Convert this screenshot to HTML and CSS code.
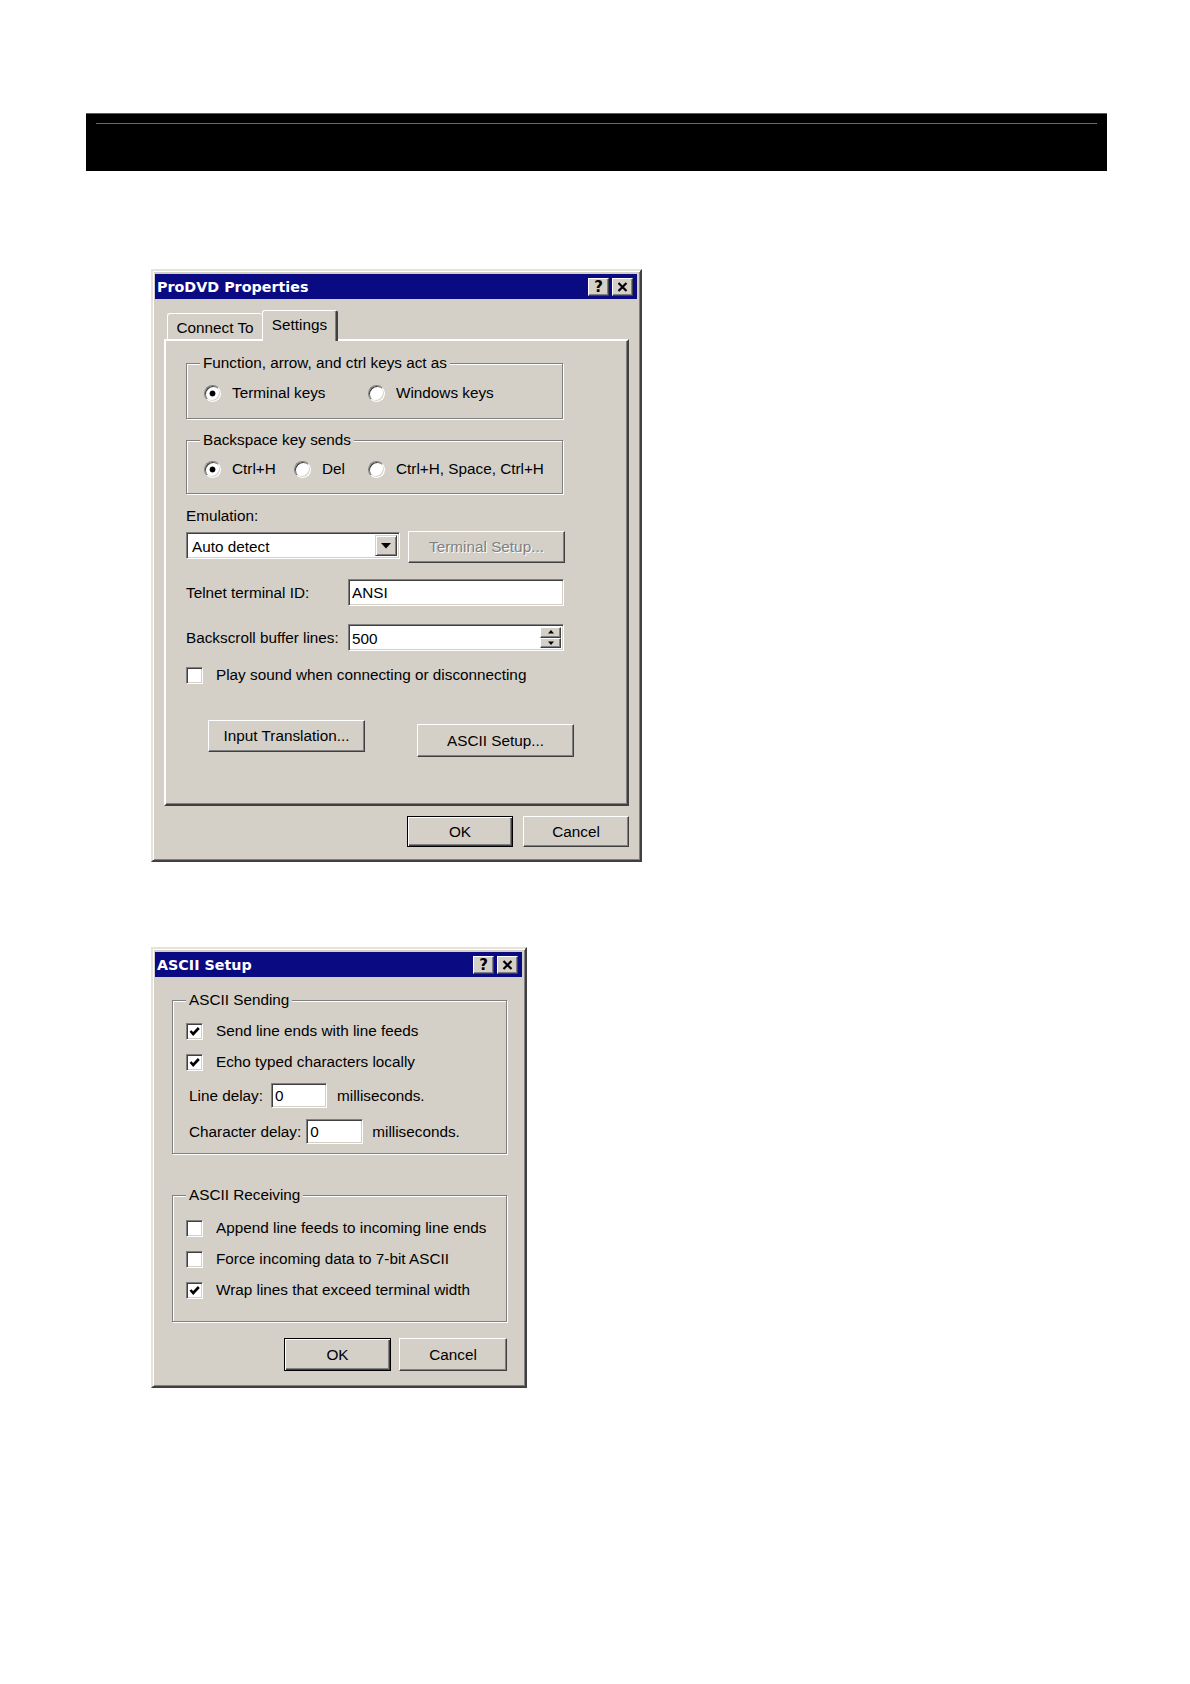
FILE: index.html
```html
<!DOCTYPE html>
<html lang="en">
<head>
    <meta charset="UTF-8">
    <meta name="viewport" content="width=device-width, initial-scale=1.0">
    <title>ProDVD Properties - ASCII Setup</title>
    <link rel="stylesheet" href="styles.css">
</head>
<body>
    <div class="banner"><div class="banner-rule"></div></div>

    <!-- ProDVD Properties dialog -->
    <div class="window props">
        <div class="titlebar">
            <span>ProDVD Properties</span>
            <span class="caption-btns">
                <span class="cbtn">?</span>
                <span class="cbtn"><svg width="11" height="10" viewBox="0 0 11 10"><path d="M1.5 1L9.5 9M9.5 1L1.5 9" stroke="#000" stroke-width="2.2" fill="none"/></svg></span>
            </span>
        </div>
        <div class="body">
            <div class="tabs">
                <div class="tab tab-first">Connect To</div>
                <div class="tab tab-active">Settings</div>
            </div>
            <div class="panel">
                <div class="group keys">
                    <div class="group-label">Function, arrow, and ctrl keys act as</div>
                    <div class="choices">
                        <label class="opt w164"><span class="radio on"></span>Terminal keys</label>
                        <label class="opt"><span class="radio"></span>Windows keys</label>
                    </div>
                </div>

                <div class="group backspace">
                    <div class="group-label">Backspace key sends</div>
                    <div class="choices">
                        <label class="opt w90"><span class="radio on"></span>Ctrl+H</label>
                        <label class="opt w74"><span class="radio"></span>Del</label>
                        <label class="opt"><span class="radio"></span>Ctrl+H, Space, Ctrl+H</label>
                    </div>
                </div>

                <div class="emu-label">Emulation:</div>
                <div class="combo-row">
                    <div class="combo field">
                        <span class="combo-text">Auto detect</span>
                        <span class="drop-btn"><svg width="10" height="6" viewBox="0 0 10 6"><path d="M0 0H10L5 5.5Z" fill="#000"/></svg></span>
                    </div>
                    <button class="btn btn-setup" disabled>Terminal Setup...</button>
                </div>

                <div class="field-row telnet">
                    <span class="field-label">Telnet terminal ID:</span>
                    <div class="field text-field">ANSI</div>
                </div>

                <div class="field-row backscroll">
                    <span class="field-label">Backscroll buffer lines:</span>
                    <div class="field text-field spin-field">
                        <span class="spin-value">500</span>
                        <span class="spin">
                            <span class="spin-btn"><svg width="6" height="4" viewBox="0 0 6 4"><path d="M0 3.5H6L3 0Z" fill="#000"/></svg></span>
                            <span class="spin-btn"><svg width="6" height="4" viewBox="0 0 6 4"><path d="M0 0.5H6L3 4Z" fill="#000"/></svg></span>
                        </span>
                    </div>
                </div>

                <label class="check-row sound"><span class="check"></span>Play sound when connecting or disconnecting</label>

                <div class="action-row">
                    <button class="btn btn-translate">Input Translation...</button>
                    <button class="btn btn-ascii">ASCII Setup...</button>
                </div>
            </div>
            <div class="footer">
                <button class="btn btn-default">OK</button>
                <button class="btn">Cancel</button>
            </div>
        </div>
    </div>

    <!-- ASCII Setup dialog -->
    <div class="window ascii">
        <div class="titlebar">
            <span>ASCII Setup</span>
            <span class="caption-btns">
                <span class="cbtn">?</span>
                <span class="cbtn"><svg width="11" height="10" viewBox="0 0 11 10"><path d="M1.5 1L9.5 9M9.5 1L1.5 9" stroke="#000" stroke-width="2.2" fill="none"/></svg></span>
            </span>
        </div>
        <div class="body">
            <div class="group sending">
                <div class="group-label">ASCII Sending</div>
                <label class="check-row"><span class="check"><svg width="13" height="13" viewBox="0 0 13 13"><path d="M2.5 6L5.2 9L10.8 3" stroke="#000" stroke-width="2.6" fill="none"/></svg></span>Send line ends with line feeds</label>
                <label class="check-row"><span class="check"><svg width="13" height="13" viewBox="0 0 13 13"><path d="M2.5 6L5.2 9L10.8 3" stroke="#000" stroke-width="2.6" fill="none"/></svg></span>Echo typed characters locally</label>
                <div class="delay-row">
                    <span>Line delay:</span>
                    <div class="field delay-field line-delay">0</div>
                    <span class="unit">milliseconds.</span>
                </div>
                <div class="delay-row">
                    <span>Character delay:</span>
                    <div class="field delay-field char-delay">0</div>
                    <span class="unit unit-wide">milliseconds.</span>
                </div>
            </div>

            <div class="group receiving">
                <div class="group-label">ASCII Receiving</div>
                <label class="check-row"><span class="check"></span>Append line feeds to incoming line ends</label>
                <label class="check-row"><span class="check"></span>Force incoming data to 7-bit ASCII</label>
                <label class="check-row"><span class="check"><svg width="13" height="13" viewBox="0 0 13 13"><path d="M2.5 6L5.2 9L10.8 3" stroke="#000" stroke-width="2.6" fill="none"/></svg></span>Wrap lines that exceed terminal width</label>
            </div>

            <div class="footer">
                <button class="btn btn-default">OK</button>
                <button class="btn btn-cancel">Cancel</button>
            </div>
        </div>
    </div>
</body>
</html>
```

FILE: styles.css
```css
body {
    margin: 0;
    background: #fff;
    font-family: "Liberation Sans", Arial, sans-serif;
    font-size: 15.3px;
    color: #000;
}

.banner {
    box-sizing: border-box;
    width: 1021px;
    height: 58px;
    margin: 113px 0 0 86px;
    padding-top: 9px;
    background: #000;
    border-top: 1px solid #5c5c5c;
}
.banner-rule {
    height: 1px;
    margin: 0 10px;
    background: #6a6a6a;
}

/* window frame */
.window {
    box-sizing: border-box;
    margin-left: 151px;
    padding: 3px 3px 0 2px;
    background: #d4d0c8;
    border: 2px solid;
    border-color: #e6e3dc #404040 #404040 #e6e3dc;
    box-shadow: inset 1px 1px #fff, inset -1px -1px #808080;
}
.props {
    width: 491px;
    height: 593px;
    margin-top: 98px;
}
.ascii {
    width: 376px;
    height: 441px;
    margin-top: 85px;
}
.titlebar {
    display: flex;
    align-items: center;
    justify-content: space-between;
    height: 25px;
    padding: 0 4px 0 2px;
    background: #0a0a82;
    color: #fff;
    font-family: "DejaVu Sans", sans-serif;
    font-weight: bold;
    font-size: 14.3px;
}
.caption-btns {
    display: flex;
    gap: 3px;
}
.cbtn {
    box-sizing: border-box;
    display: flex;
    align-items: center;
    justify-content: center;
    width: 21px;
    height: 18px;
    background: #d4d0c8;
    border: 1px solid;
    border-color: #fff #404040 #404040 #fff;
    box-shadow: inset -1px -1px #808080;
    color: #000;
    font-size: 15px;
}

.props .body {
    padding: 11px 8px 0 9px;
}
.ascii .body {
    padding: 23px 15px 0 17px;
}

/* tabs */
.tabs {
    display: flex;
    align-items: flex-end;
    height: 29px;
    padding-left: 3px;
}
.tab {
    box-sizing: border-box;
    height: 26px;
    padding-top: 4px;
    line-height: 20px;
    text-align: center;
    background: #d4d0c8;
    border: 1px solid;
    border-color: #fff #404040 transparent #fff;
    border-bottom: none;
    border-radius: 3px 3px 0 0;
}
.tab-first {
    width: 95px;
    border-right: none;
}
.tab-active {
    position: relative;
    z-index: 1;
    width: 76px;
    height: 31px;
    margin-bottom: -2px;
    border-right-width: 2px;
    box-shadow: inset -1px 0 #808080;
}
.panel {
    box-sizing: border-box;
    width: 465px;
    height: 467px;
    padding: 22px 0 0 20px;
    border: 2px solid;
    border-color: #fff #404040 #404040 #fff;
    box-shadow: inset -1px -1px #808080;
}

/* group boxes */
.group {
    box-sizing: border-box;
    border: 1px solid #808080;
    box-shadow: 1px 1px #fff, inset 1px 1px #fff;
}
.group-label {
    width: fit-content;
    margin: -11px 0 0 13px;
    padding: 0 3px;
    line-height: 20px;
    background: #d4d0c8;
}
.panel .group {
    width: 377px;
}
.keys {
    padding-bottom: 15px;
}
.keys .choices {
    margin-top: 10px;
}
.backspace {
    margin-top: 21px;
    padding-bottom: 14px;
}
.backspace .choices {
    margin-top: 9px;
}
.choices {
    display: flex;
    padding-left: 17px;
    line-height: 20px;
}
.opt {
    display: flex;
    align-items: center;
    gap: 11px;
}
.w164 { width: 164px; }
.w90 { width: 90px; }
.w74 { width: 74px; }

.radio {
    box-sizing: border-box;
    width: 17px;
    height: 17px;
    border-radius: 50%;
    border: 1px solid;
    border-color: #808080 #fff #fff #808080;
    box-shadow: inset 1px 1px #404040, inset -1px -1px #d4d0c8;
    background: #fff;
}
.radio.on {
    background: radial-gradient(circle, #000 0 2.6px, #fff 3.3px);
}

/* sunken fields */
.field {
    box-sizing: border-box;
    border: 1px solid;
    border-color: #808080 #fff #fff #808080;
    box-shadow: inset 1px 1px #404040, inset -1px -1px #d4d0c8;
    background: #fff;
}
.emu-label {
    margin-top: 12px;
    line-height: 20px;
}
.combo-row {
    display: flex;
    align-items: flex-start;
    margin-top: 5px;
}
.combo {
    display: flex;
    width: 214px;
    height: 27px;
    margin-top: 1px;
    padding: 2px;
}
.combo-text {
    flex: 1;
    padding-left: 3px;
    line-height: 23px;
}
.drop-btn {
    box-sizing: border-box;
    display: flex;
    align-items: center;
    justify-content: center;
    width: 22px;
    background: #d4d0c8;
    border: 1px solid;
    border-color: #d4d0c8 #404040 #404040 #d4d0c8;
    box-shadow: inset 1px 1px #fff, inset -1px -1px #808080;
}
.field-row {
    display: flex;
    align-items: center;
    height: 27px;
}
.telnet {
    margin-top: 16px;
}
.backscroll {
    margin-top: 18px;
}
.field-label {
    width: 162px;
}
.text-field {
    width: 216px;
    height: 27px;
    padding-left: 3px;
    line-height: 25px;
}
.spin-field {
    display: flex;
    padding: 2px 2px 2px 3px;
    line-height: 23px;
}
.spin-value {
    flex: 1;
}
.spin {
    display: flex;
    flex-direction: column;
    width: 21px;
}
.spin-btn {
    box-sizing: border-box;
    flex: 1;
    display: flex;
    align-items: center;
    justify-content: center;
    background: #d4d0c8;
    border: 1px solid;
    border-color: #fff #404040 #404040 #fff;
    box-shadow: inset -1px -1px #808080;
}

/* checkboxes */
.check-row {
    display: flex;
    align-items: center;
    gap: 13px;
    height: 20px;
    line-height: 20px;
}
.check {
    box-sizing: border-box;
    display: flex;
    align-items: center;
    justify-content: center;
    width: 17px;
    height: 17px;
    border: 1px solid;
    border-color: #808080 #fff #fff #808080;
    box-shadow: inset 1px 1px #404040, inset -1px -1px #d4d0c8;
    background: #fff;
}
.sound {
    margin-top: 14px;
}

/* buttons */
.btn {
    box-sizing: border-box;
    padding: 0;
    font: inherit;
    color: #000;
    background: #d4d0c8;
    border: 1px solid;
    border-color: #fff #404040 #404040 #fff;
    box-shadow: inset -1px -1px #808080;
}
.btn:disabled {
    color: #808080;
    text-shadow: 1px 1px #fff;
}
.btn-default {
    border-color: #000;
    box-shadow: inset 1px 1px #fff, inset -1px -1px #404040, inset -2px -2px #808080;
}
.btn-setup {
    width: 157px;
    height: 32px;
    margin-left: 8px;
}
.action-row {
    display: flex;
    align-items: flex-start;
    margin-top: 35px;
}
.btn-translate {
    width: 157px;
    height: 32px;
    margin-left: 22px;
}
.btn-ascii {
    width: 157px;
    height: 33px;
    margin: 4px 0 0 52px;
}
.footer {
    display: flex;
    justify-content: flex-end;
}
.props .footer {
    gap: 10px;
    margin-top: 10px;
}
.props .footer .btn {
    width: 106px;
    height: 31px;
}
.ascii .footer {
    gap: 8px;
    margin-top: 16px;
}
.ascii .footer .btn {
    width: 107px;
    height: 33px;
}
.ascii .footer .btn-cancel {
    width: 108px;
}

/* ASCII setup groups */
.ascii .group {
    width: 335px;
    padding-left: 13px;
}
.ascii .group-label {
    margin-left: 0;
}
.sending {
    padding-bottom: 9px;
}
.sending .check-row,
.delay-row {
    margin-top: 11px;
}
.delay-row {
    display: flex;
    align-items: center;
    height: 25px;
    padding-left: 3px;
}
.delay-field {
    height: 25px;
    margin-left: 8px;
    padding-left: 3px;
    line-height: 23px;
}
.line-delay {
    width: 56px;
}
.char-delay {
    width: 57px;
    margin-left: 5px;
}
.unit {
    margin-left: 10px;
}
.unit-wide {
    margin-left: 9px;
}
.receiving {
    margin-top: 41px;
    padding-bottom: 21px;
}
.receiving .check-row {
    margin-top: 11px;
}
.receiving .group-label + .check-row {
    margin-top: 13px;
}
```
